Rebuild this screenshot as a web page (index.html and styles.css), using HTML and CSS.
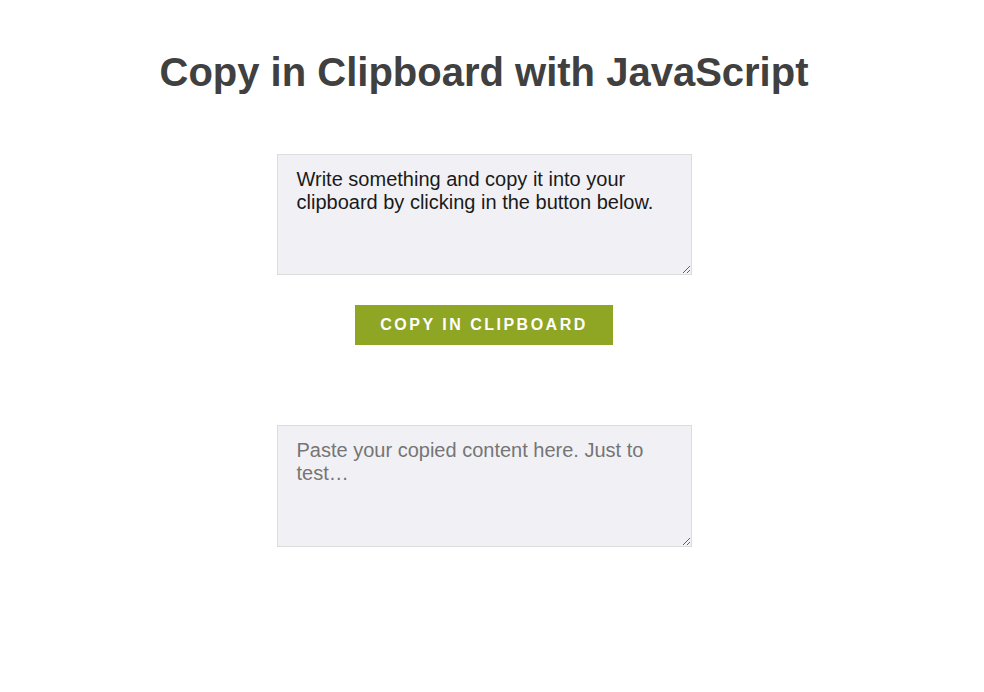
FILE: index.html
```html
<!DOCTYPE html>
<html lang="en">
<head>
<meta charset="utf-8">
<title>Copy in Clipboard with JavaScript</title>
<link rel="stylesheet" href="styles.css">
</head>
<body>
<main class="page">
  <h1 class="title">Copy in Clipboard with JavaScript</h1>
  <textarea class="box" id="source">Write something and copy it into your clipboard by clicking in the button below.</textarea>
  <button class="copy-btn" type="button">Copy in clipboard</button>
  <textarea class="box box-paste" placeholder="Paste your copied content here. Just to test…"></textarea>
</main>
</body>
</html>
```
FILE: styles.css
```css
html, body {
  margin: 0;
  padding: 0;
  background: #ffffff;
}

.page {
  width: 968px;
  display: flex;
  flex-direction: column;
  align-items: center;
  font-family: "Liberation Sans", Arial, sans-serif;
}

.title {
  margin: 49px 0 0 0;
  font-size: 40px;
  line-height: 46px;
  font-weight: bold;
  color: #404040;
}

.box {
  box-sizing: border-box;
  width: 415px;
  height: 121px;
  margin-top: 59px;
  padding: 13px 19px;
  border: 1px solid #dcdcdc;
  background: #f1f1f5;
  font-family: "Liberation Sans", Arial, sans-serif;
  font-size: 20px;
  line-height: 23px;
  color: #1a1a1a;
  outline: none;
}

.box::placeholder {
  color: #757575;
}

.box-paste {
  height: 122px;
  margin-top: 80px;
}

.copy-btn {
  margin-top: 30px;
  width: 258px;
  height: 40px;
  border: none;
  background: #8fa524;
  color: #ffffff;
  font-family: "Liberation Sans", Arial, sans-serif;
  font-weight: bold;
  font-size: 16px;
  letter-spacing: 2.5px;
  text-transform: uppercase;
  cursor: pointer;
}
```
